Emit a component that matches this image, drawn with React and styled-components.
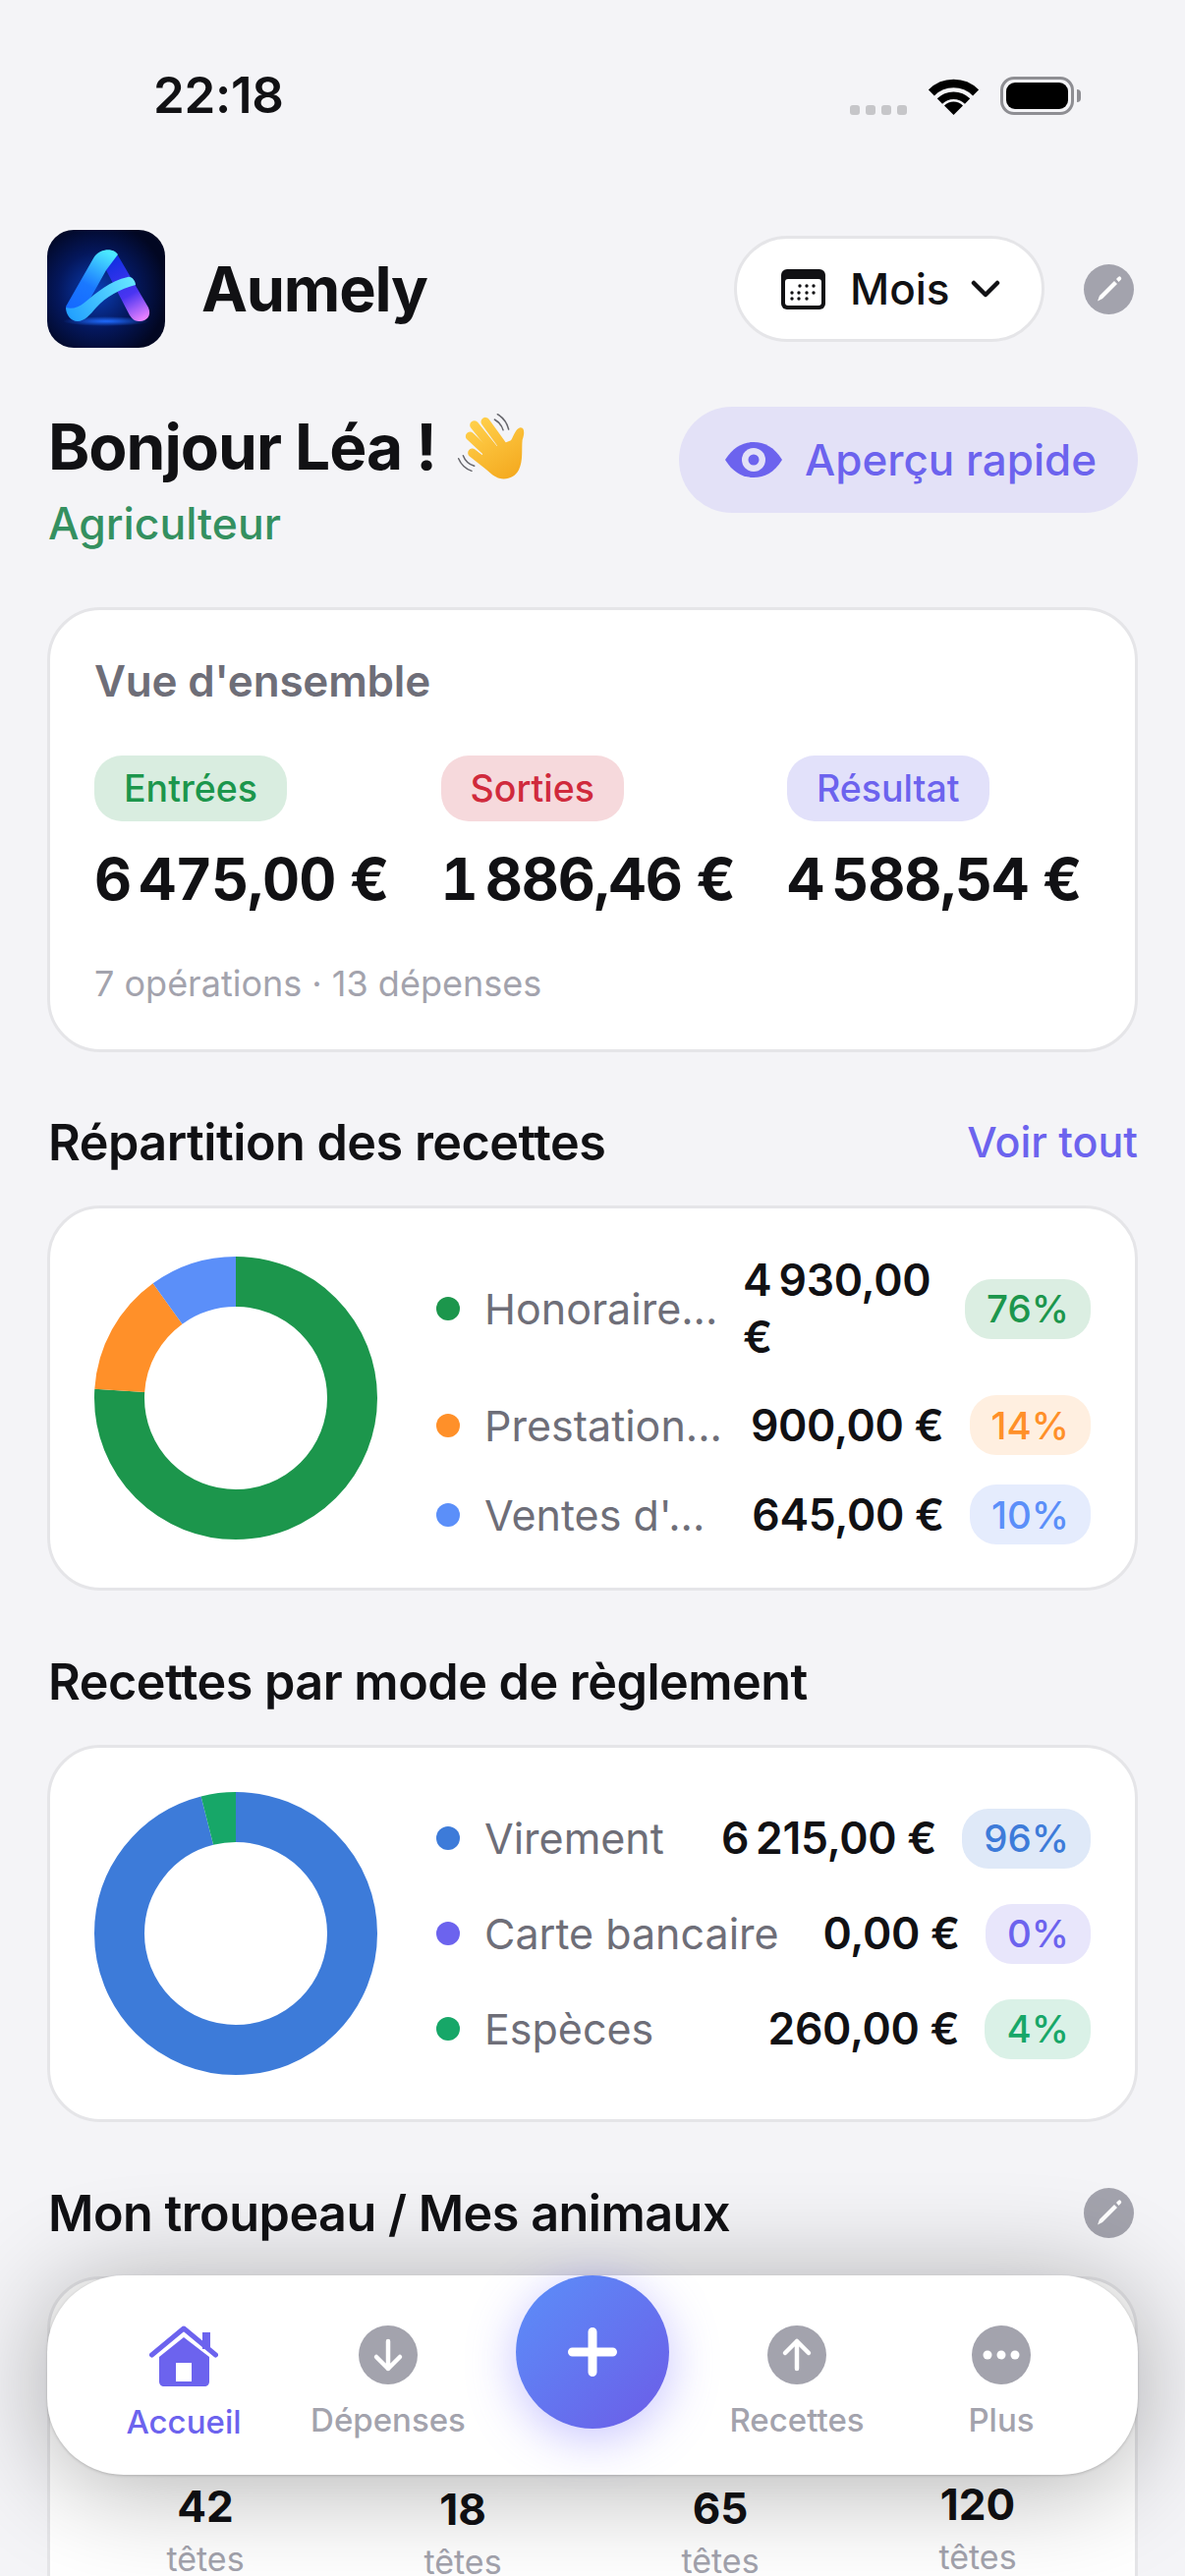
import React from "react";
import styled, { createGlobalStyle } from "styled-components";

const GlobalStyle = createGlobalStyle`
  html, body {
    margin: 0;
    padding: 0;
    background: #f4f4f7;
  }
  * {
    box-sizing: border-box;
  }
`;

const colors = {
  ink: "#111114",
  grey: "#6e6e78",
  light: "#a3a3ad",
  purple: "#6c63ee",
  line: "#e5e5e8",
};

const Screen = styled.div`
  position: relative;
  width: 1206px;
  height: 2622px;
  overflow: hidden;
  background: #f4f4f7;
  font-family: Inter, "Noto Sans", sans-serif;
  color: ${colors.ink};
`;

const StatusBar = styled.div`
  display: flex;
  align-items: flex-start;
  height: 234px;
  padding: 64px 113px 0 156px;
`;

const Clock = styled.div`
  font-size: 51px;
  font-weight: 600;
  line-height: 66px;
  letter-spacing: -0.3px;
`;

const StatusIcons = styled.div`
  display: flex;
  align-items: flex-end;
  margin-left: auto;
  margin-top: 14px;
  height: 39px;
`;

const SignalDots = styled.div`
  display: flex;
  gap: 6px;
  margin-right: 22px;
  margin-bottom: 0;
`;

const SignalDot = styled.span`
  width: 10px;
  height: 10px;
  border-radius: 3px;
  background: #c6c6c9;
`;

const Battery = styled.div`
  position: relative;
  width: 75px;
  height: 39px;
  margin-left: 22px;
  padding: 3px;
  border: 3px solid #8e8e93;
  border-radius: 14px;
  background: #f4f4f7;
  &::after {
    content: "";
    position: absolute;
    right: -10px;
    top: 10px;
    width: 4px;
    height: 13px;
    border-radius: 0 4px 4px 0;
    background: #8e8e93;
  }
`;

const BatteryFill = styled.div`
  width: 100%;
  height: 100%;
  border-radius: 9px;
  background: #000;
`;

const Content = styled.div`
  padding: 0 48px;
`;

const Header = styled.header`
  display: flex;
  align-items: center;
  height: 120px;
`;

const AppName = styled.div`
  margin-left: 37px;
  font-size: 63px;
  font-weight: 700;
  letter-spacing: -1.2px;
`;

const PeriodButton = styled.button`
  display: flex;
  align-items: center;
  width: 316px;
  height: 108px;
  margin-left: auto;
  padding: 0 0 0 45px;
  border: 3px solid ${colors.line};
  border-radius: 54px;
  background: #fff;
  font-family: inherit;
  color: ${colors.ink};
`;

const PeriodLabel = styled.span`
  margin: 0 21px 0 25px;
  font-size: 44px;
  font-weight: 500;
`;

const EditButton = styled.div`
  display: flex;
  flex: none;
  width: 51px;
  height: 51px;
  margin: 0 4px 0 ${(p) => p.$gap || 0}px;
  border-radius: 50%;
  background: #a3a3ad;
`;

const Greeting = styled.section`
  display: flex;
  justify-content: space-between;
  margin-top: 60px;
`;

const Hello = styled.div`
  display: flex;
  align-items: center;
  gap: 20px;
  height: 80px;
  padding-left: 1px;
  font-size: 64px;
  font-weight: 700;
  letter-spacing: -1px;
`;

const Role = styled.div`
  margin-top: 9px;
  padding-left: 1px;
  font-size: 44.5px;
  font-weight: 500;
  line-height: 60px;
  color: #349060;
`;

const PreviewButton = styled.div`
  display: flex;
  align-items: center;
  gap: 22px;
  height: 108px;
  width: 467px;
  padding-left: 46px;
  border-radius: 54px;
  background: #e3e1f7;
  font-size: 44px;
  font-weight: 500;
  color: ${colors.purple};
`;

const Card = styled.section`
  margin-top: ${(p) => p.$top || 0}px;
  border: 3px solid ${colors.line};
  border-radius: 54px;
  background: #fff;
`;

const OverviewCard = styled(Card)`
  height: 453px;
  padding: 44px 45px 0;
`;

const CardTitle = styled.h2`
  margin: 0;
  font-size: 44px;
  font-weight: 600;
  line-height: 56px;
  letter-spacing: -0.2px;
  color: ${colors.grey};
`;

const Totals = styled.div`
  display: grid;
  grid-template-columns: repeat(3, 352.5px);
  margin-top: 48px;
`;

const TotalPill = styled.span`
  display: inline-flex;
  align-items: center;
  height: 67px;
  padding: 0 30px;
  border-radius: 28px;
  background: ${(p) => p.$bg};
  color: ${(p) => p.$color};
  font-size: 37.5px;
  font-weight: 500;
`;

const TotalValue = styled.div`
  margin-top: 23px;
  font-size: 59px;
  font-weight: 700;
  font-variant-numeric: tabular-nums;
  line-height: 72px;
  letter-spacing: -1.1px;
  white-space: nowrap;
`;

const Footnote = styled.div`
  margin-top: 46px;
  font-size: 36px;
  line-height: 48px;
  color: ${colors.light};
`;

const SectionHead = styled.div`
  display: flex;
  align-items: center;
  justify-content: space-between;
  height: 60px;
  margin-top: ${(p) => p.$top}px;
  padding-left: 1px;
`;

const SectionTitle = styled.h2`
  margin: 0;
  font-size: 50.3px;
  font-weight: 600;
  letter-spacing: -0.5px;
`;

const SeeAll = styled.span`
  font-size: 43px;
  font-weight: 500;
  color: ${colors.purple};
`;

const ChartCard = styled(Card)`
  display: flex;
  align-items: center;
  gap: 60px;
  height: ${(p) => p.$height}px;
  margin-top: 35px;
  padding: 0 45px;
`;

const Legend = styled.div`
  display: flex;
  flex: 1;
  flex-direction: column;
  gap: ${(p) => p.$gap}px;
  min-width: 0;
`;

const LegendRow = styled.div`
  display: flex;
  align-items: center;
`;

const Dot = styled.span`
  flex: none;
  width: 24px;
  height: 24px;
  margin-right: 25px;
  border-radius: 50%;
  background: ${(p) => p.$color};
`;

const LegendLabel = styled.span`
  flex: 1;
  min-width: 0;
  font-size: 43px;
  color: ${colors.grey};
  white-space: nowrap;
  overflow: hidden;
`;

const Amount = styled.span`
  flex: none;
  max-width: ${(p) => (p.$narrow ? "200px" : "none")};
  margin-right: 26px;
  font-size: 44.5px;
  font-weight: 600;
  line-height: 58px;
  letter-spacing: -0.3px;
  white-space: ${(p) => (p.$narrow ? "normal" : "nowrap")};
`;

const Percent = styled.span`
  display: flex;
  flex: none;
  align-items: center;
  height: 61px;
  padding: 0 22px;
  border-radius: 27px;
  background: ${(p) => p.$bg};
  color: ${(p) => p.$color};
  font-size: 38.5px;
  font-weight: 500;
`;

const HerdCard = styled(Card)`
  height: 420px;
  margin-top: 35px;
  padding: 207px 27px 0;
`;

const HerdGrid = styled.div`
  display: grid;
  grid-template-columns: repeat(4, 262px);
`;

const HerdItem = styled.div`
  position: relative;
  top: ${(p) => p.$shift}px;
  text-align: center;
`;

const HerdCount = styled.div`
  font-size: 44px;
  font-weight: 700;
  line-height: 44px;
`;

const HerdUnit = styled.div`
  margin-top: 19px;
  font-size: 34px;
  line-height: 26px;
  color: ${colors.light};
`;

const TabBar = styled.nav`
  position: absolute;
  left: 48px;
  bottom: 103px;
  display: grid;
  grid-template-columns: repeat(5, 1fr);
  width: 1110px;
  height: 203px;
  padding: 0 35px;
  border-radius: 78px;
  background: #fff;
  box-shadow: 0 10px 110px rgba(0, 0, 0, 0.32), 0 1px 3px rgba(0, 0, 0, 0.18);
`;

const TabItem = styled.div`
  display: flex;
  flex-direction: column;
  align-items: center;
  padding-top: 51px;
  font-size: 33px;
  font-weight: 500;
  color: ${(p) => (p.$active ? colors.purple : colors.light)};
`;

const TabLabel = styled.span`
  margin-top: 14px;
  line-height: 44px;
`;

const PlusButton = styled.div`
  display: flex;
  align-items: center;
  justify-content: center;
  justify-self: center;
  width: 156px;
  height: 156px;
  border-radius: 50%;
  background: linear-gradient(135deg, #5b8ff9, #6c5ce7);
  box-shadow: 0 10px 50px rgba(108, 99, 255, 0.38);
`;

function Wifi() {
  return (
    <svg width="51" height="37" viewBox="0 0 51 37">
      <g fill="none" stroke="#000">
        <path d="M2.9 14.4A32 32 0 0 1 48.1 14.4" strokeWidth="8.5" />
        <path d="M11.4 23A20 20 0 0 1 39.6 23" strokeWidth="7.5" />
      </g>
      <path d="M25.5 37L16 27.5A13.4 13.4 0 0 1 35 27.5Z" fill="#000" />
    </svg>
  );
}

function Logo() {
  return (
    <svg width="120" height="120" viewBox="0 0 120 120" style={{ flex: "none" }}>
      <defs>
        <radialGradient id="logoBg" cx="0.42" cy="0.52" r="0.6">
          <stop offset="0" stopColor="#0a3fb8" />
          <stop offset="0.55" stopColor="#04175c" />
          <stop offset="1" stopColor="#020722" />
        </radialGradient>
        <radialGradient id="logoGlow" cx="0.5" cy="0.5" r="0.5">
          <stop offset="0" stopColor="#1f6bff" />
          <stop offset="1" stopColor="#1f6bff" stopOpacity="0" />
        </radialGradient>
        <linearGradient id="logoLeft" gradientUnits="userSpaceOnUse" x1="60" y1="22" x2="26" y2="84">
          <stop offset="0" stopColor="#4be8ff" />
          <stop offset="0.55" stopColor="#1a78ff" />
          <stop offset="1" stopColor="#1468ff" />
        </linearGradient>
        <linearGradient id="logoRight" gradientUnits="userSpaceOnUse" x1="62" y1="30" x2="96" y2="92">
          <stop offset="0" stopColor="#0f2fe0" />
          <stop offset="0.6" stopColor="#4a35f2" />
          <stop offset="1" stopColor="#ea82ff" />
        </linearGradient>
        <linearGradient id="logoSwoosh" gradientUnits="userSpaceOnUse" x1="20" y1="90" x2="90" y2="48">
          <stop offset="0" stopColor="#1f9dff" />
          <stop offset="1" stopColor="#6aeaff" />
        </linearGradient>
      </defs>
      <rect width="120" height="120" rx="27" fill="url(#logoBg)" />
      <ellipse cx="60" cy="93" rx="44" ry="5" fill="url(#logoGlow)" />
      <path
        d="M62 26C66 22 70 24 72 26L103 79C107 88 100 94 93 93C89 93 86 90 84 87L60 41Z"
        fill="url(#logoRight)"
      />
      <path
        d="M19 78L47 29C52 20 66 17 72 25L66 33C64 36 62 38 60 41L36 84L22 86Z"
        fill="url(#logoLeft)"
      />
      <path
        d="M19 79C19 86 24 93 31 93C38 93 44 86 50 79C60 68 74 60 90 56C90 52 86 47 82 48C64 52 50 64 38 74C32 79 25 81 19 79Z"
        fill="url(#logoSwoosh)"
      />
    </svg>
  );
}

function CalendarIcon() {
  const dots = [
    [19, 17], [26, 17], [33, 17],
    [11, 24], [18, 24], [26, 24], [33, 24],
    [11, 30], [18, 30], [26, 30],
  ];
  return (
    <svg width="45" height="41" viewBox="0 0 45 41">
      <rect width="45" height="41" rx="6" fill="#111114" />
      <rect x="4" y="10" width="37" height="27" rx="3" fill="#fff" />
      {dots.map(([x, y]) => (
        <circle key={`${x}-${y}`} cx={x} cy={y} r="1.7" fill="#111114" />
      ))}
    </svg>
  );
}

function Chevron() {
  return (
    <svg width="30" height="18" viewBox="0 0 30 18">
      <path d="M3 3L15 15L27 3" fill="none" stroke="#111114" strokeWidth="4.5" strokeLinecap="round" strokeLinejoin="round" />
    </svg>
  );
}

function PencilBadge({ gap }) {
  return (
    <EditButton $gap={gap}>
      <svg width="51" height="51" viewBox="0 0 51 51">
        <path d="M14 37.5L16 32L31 17L34 20L19 35Z" fill="#fff" />
        <path d="M33 15L35 13C36 12 37 12 37.5 13C38.5 14 38.5 15 37.5 16L35.5 18Z" fill="#fff" />
      </svg>
    </EditButton>
  );
}

function WavingHand() {
  return (
    <svg width="72" height="68" viewBox="70 55 216 204" style={{ flex: "none" }}>
      <defs>
        <linearGradient id="handFill" gradientUnits="userSpaceOnUse" x1="130" y1="80" x2="240" y2="260">
          <stop offset="0" stopColor="#ffcf4a" />
          <stop offset="1" stopColor="#f4a91f" />
        </linearGradient>
      </defs>
      <g fill="none" stroke="#66666c" strokeWidth="4.5" strokeLinecap="round">
        <path d="M188 76C202 84 210 94 214 108" />
        <path d="M197 60C214 70 226 86 231 106" />
        <path d="M92 186C98 202 108 212 126 218" />
        <path d="M78 195C86 214 98 226 118 233" />
      </g>
      <g fill="none" stroke="url(#handFill)" strokeWidth="27" strokeLinecap="round">
        <path d="M126 93L184 165" />
        <path d="M160 83L212 155" />
        <path d="M113 127L175 185" />
        <path d="M120 178L180 225" />
      </g>
      <path
        d="M160 170L238 140C248 124 252 104 266 101C280 100 280 118 273 138C270 165 276 200 262 230C250 255 215 266 190 250C170 238 150 215 142 195Z"
        fill="url(#handFill)"
      />
    </svg>
  );
}

function EyeIcon() {
  return (
    <svg width="60" height="38" viewBox="0 0 60 38">
      <path d="M1 19C9 6 19 1 30 1C41 1 51 6 59 19C51 32 41 37 30 37C19 37 9 32 1 19Z" fill="#6c63ee" />
      <circle cx="30" cy="19" r="12" fill="#e3e1f7" />
      <circle cx="30" cy="19" r="5.5" fill="#6c63ee" />
    </svg>
  );
}

function Donut({ segments }) {
  const radius = 118.5;
  const length = 2 * Math.PI * radius;
  let offset = 0;
  return (
    <svg width="288" height="288" viewBox="0 0 288 288" style={{ flex: "none" }}>
      <g transform="rotate(-90 144 144)" fill="none" strokeWidth="51">
        {segments.map((s) => {
          const dash = (s.share / 100) * length;
          const circle = (
            <circle
              key={s.color}
              cx="144"
              cy="144"
              r={radius}
              stroke={s.color}
              strokeDasharray={`${dash} ${length - dash}`}
              strokeDashoffset={-offset}
            />
          );
          offset += dash;
          return circle;
        })}
      </g>
    </svg>
  );
}

function HomeIcon() {
  return (
    <svg width="70" height="62" viewBox="0 0 70 62">
      <path d="M54 7H62V24H54Z" fill="#6c63ee" />
      <path d="M2.5 30L35 3L67.5 30" fill="none" stroke="#6c63ee" strokeWidth="5" strokeLinecap="round" strokeLinejoin="round" />
      <path d="M10 32L35 12L61 32V57C61 60 59 62 56 62H15C12 62 10 60 10 57Z" fill="#6c63ee" />
      <rect x="27" y="38" width="16" height="19" fill="#fff" />
    </svg>
  );
}

function RoundIcon({ kind }) {
  return (
    <svg width="60" height="60" viewBox="0 0 60 60">
      <circle cx="30" cy="30" r="30" fill="#a3a3ad" />
      <g fill="none" stroke="#fff" strokeWidth="4.5" strokeLinecap="round" strokeLinejoin="round">
        {kind === "down" && <path d="M30 16V44M18 32L30 44L42 32" />}
        {kind === "up" && <path d="M30 44V16M18 28L30 16L42 28" />}
      </g>
      {kind === "more" && (
        <g fill="#fff">
          <circle cx="16" cy="30" r="4.5" />
          <circle cx="30" cy="30" r="4.5" />
          <circle cx="44" cy="30" r="4.5" />
        </g>
      )}
    </svg>
  );
}

const totals = [
  { label: "Entrées", value: "6\u2009475,00 €", bg: "#d9ede0", color: "#1c964c" },
  { label: "Sorties", value: "1\u2009886,46 €", bg: "#f6d9dc", color: "#d02a3c" },
  { label: "Résultat", value: "4\u2009588,54 €", bg: "#e2e1fa", color: "#6c63ee" },
];

const incomeRows = [
  { label: "Honoraire...", amount: "4\u2009930,00 €", share: 76, color: "#1c964c", bg: "#dbeee2", narrow: true },
  { label: "Prestation...", amount: "900,00 €", share: 14, color: "#ff9029", bg: "#ffefe0" },
  { label: "Ventes d'...", amount: "645,00 €", share: 10, color: "#5b8ff9", bg: "#e5ecfd" },
];

const paymentRows = [
  { label: "Virement", amount: "6\u2009215,00 €", share: 96, color: "#3d7bd9", bg: "#dfe9f8" },
  { label: "Carte bancaire", amount: "0,00 €", share: 0, color: "#6c63ee", bg: "#e8e6fb" },
  { label: "Espèces", amount: "260,00 €", share: 4, color: "#17a768", bg: "#daf1e7" },
];

const herd = [
  { count: 42, shift: 2 },
  { count: 18, shift: 5 },
  { count: 65, shift: 4 },
  { count: 120, shift: 0 },
];

function ChartLegend({ rows, gap }) {
  return (
    <Legend $gap={gap}>
      {rows.map((r) => (
        <LegendRow key={r.label}>
          <Dot $color={r.color} />
          <LegendLabel>{r.label}</LegendLabel>
          <Amount $narrow={r.narrow}>{r.amount}</Amount>
          <Percent $bg={r.bg} $color={r.color}>{r.share}%</Percent>
        </LegendRow>
      ))}
    </Legend>
  );
}

export default function App() {
  return (
    <Screen>
      <GlobalStyle />
      <StatusBar>
        <Clock>22:18</Clock>
        <StatusIcons>
          <SignalDots>
            <SignalDot />
            <SignalDot />
            <SignalDot />
            <SignalDot />
          </SignalDots>
          <Wifi />
          <Battery>
            <BatteryFill />
          </Battery>
        </StatusIcons>
      </StatusBar>

      <Content>
        <Header>
          <Logo />
          <AppName>Aumely</AppName>
          <PeriodButton>
            <CalendarIcon />
            <PeriodLabel>Mois</PeriodLabel>
            <Chevron />
          </PeriodButton>
          <PencilBadge gap={40} />
        </Header>

        <Greeting>
          <div>
            <Hello>
              Bonjour Léa !
              <WavingHand />
            </Hello>
            <Role>Agriculteur</Role>
          </div>
          <PreviewButton>
            <EyeIcon />
            Aperçu rapide
          </PreviewButton>
        </Greeting>

        <OverviewCard $top={55}>
          <CardTitle>Vue d'ensemble</CardTitle>
          <Totals>
            {totals.map((t) => (
              <div key={t.label}>
                <TotalPill $bg={t.bg} $color={t.color}>{t.label}</TotalPill>
                <TotalValue>{t.value}</TotalValue>
              </div>
            ))}
          </Totals>
          <Footnote>7 opérations · 13 dépenses</Footnote>
        </OverviewCard>

        <SectionHead $top={61}>
          <SectionTitle>Répartition des recettes</SectionTitle>
          <SeeAll>Voir tout</SeeAll>
        </SectionHead>
        <ChartCard $height={392}>
          <Donut segments={incomeRows} />
          <ChartLegend rows={incomeRows} gap={30} />
        </ChartCard>

        <SectionHead $top={62}>
          <SectionTitle>Recettes par mode de règlement</SectionTitle>
        </SectionHead>
        <ChartCard $height={384}>
          <Donut segments={paymentRows} />
          <ChartLegend rows={paymentRows} gap={36} />
        </ChartCard>

        <SectionHead $top={62}>
          <SectionTitle>Mon troupeau / Mes animaux</SectionTitle>
          <PencilBadge />
        </SectionHead>
        <HerdCard>
          <HerdGrid>
            {herd.map((h) => (
              <HerdItem key={h.count} $shift={h.shift}>
                <HerdCount>{h.count}</HerdCount>
                <HerdUnit>têtes</HerdUnit>
              </HerdItem>
            ))}
          </HerdGrid>
        </HerdCard>
      </Content>

      <TabBar>
        <TabItem $active>
          <HomeIcon />
          <TabLabel>Accueil</TabLabel>
        </TabItem>
        <TabItem>
          <RoundIcon kind="down" />
          <TabLabel>Dépenses</TabLabel>
        </TabItem>
        <PlusButton>
          <svg width="50" height="50" viewBox="0 0 50 50">
            <path d="M25 4.5V45.5M4.5 25H45.5" stroke="#fff" strokeWidth="9" strokeLinecap="round" />
          </svg>
        </PlusButton>
        <TabItem>
          <RoundIcon kind="up" />
          <TabLabel>Recettes</TabLabel>
        </TabItem>
        <TabItem>
          <RoundIcon kind="more" />
          <TabLabel>Plus</TabLabel>
        </TabItem>
      </TabBar>
    </Screen>
  );
}
